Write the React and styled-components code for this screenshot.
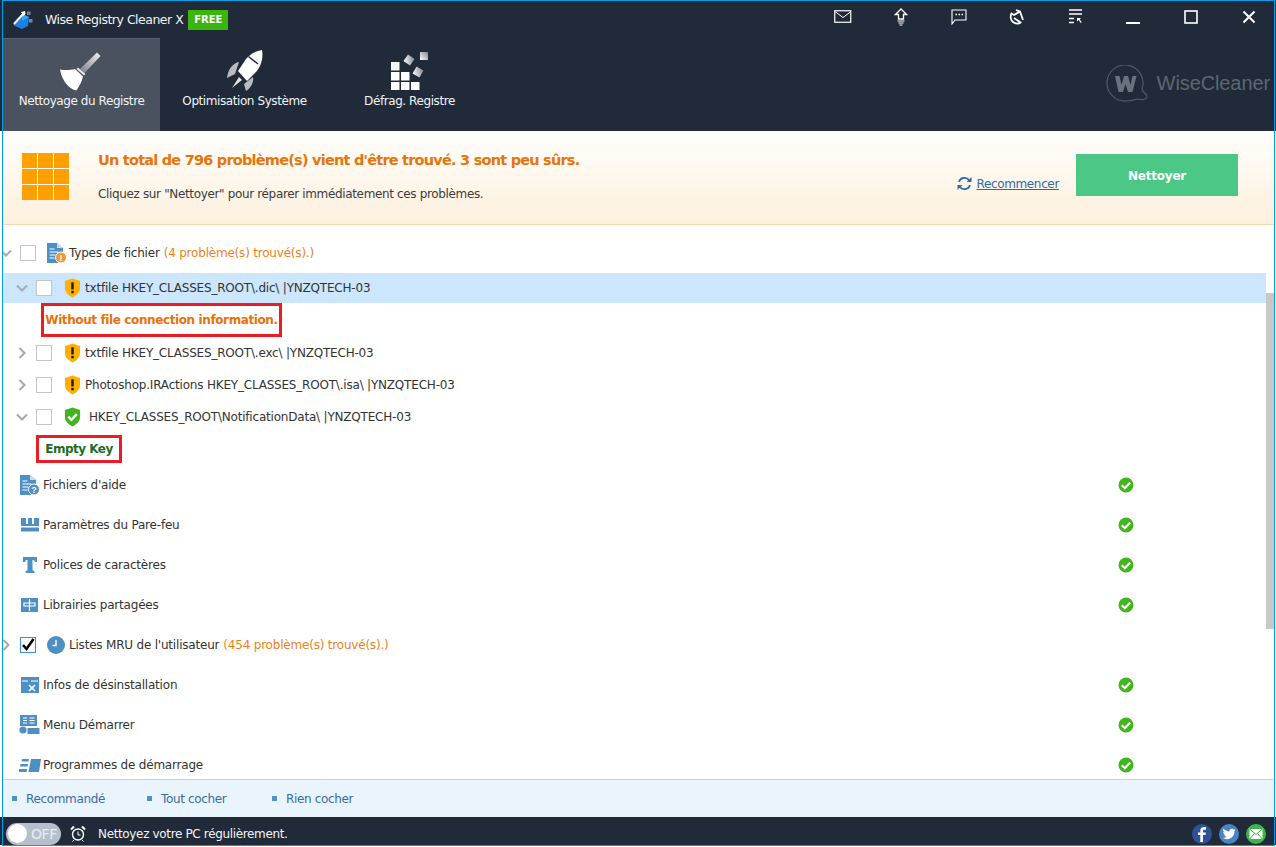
import React from "react";
import styled, { createGlobalStyle } from "styled-components";

const GlobalStyle = createGlobalStyle`
  html, body {
    margin: 0;
    padding: 0;
    height: 100%;
    overflow: hidden;
  }
  body {
    font-family: "DejaVu Sans", "Liberation Sans", sans-serif;
    background: linear-gradient(
      #202a39 131px,
      #fff 131px,
      #fff 817px,
      #202a39 817px,
      #202a39 845px,
      #fff 845px
    );
  }
`;

const Win = styled.div`
  box-sizing: border-box;
  width: 1273px;
  height: 846px;
  margin-left: 2px;
  border: 1px solid #00a0e9;
  background: #fff;
  display: flex;
  flex-direction: column;
  overflow: hidden;
  font-size: 12px;
  letter-spacing: -0.35px;
  color: #333;
`;

const Header = styled.header`
  height: 130px;
  flex: none;
  background: #202a39;
  display: flex;
  flex-direction: column;
  color: #fff;
`;

const TitleBar = styled.div`
  height: 37px;
  flex: none;
  display: flex;
  align-items: center;
  padding-left: 9px;
`;

const TitleText = styled.span`
  margin-left: 11px;
  font-size: 12.5px;
  letter-spacing: -0.5px;
  color: #f0f2f5;
`;

const FreeBadge = styled.span`
  margin-left: 5px;
  width: 40px;
  height: 20px;
  background: #38b60e;
  color: #fff;
  font-size: 10px;
  font-weight: bold;
  letter-spacing: 0;
  display: flex;
  align-items: center;
  justify-content: center;
`;

const TitleTools = styled.div`
  margin-left: auto;
  margin-right: -4px;
  display: flex;
  align-items: center;
`;

const ToolBtn = styled.span`
  width: 58px;
  height: 30px;
  display: flex;
  align-items: center;
  justify-content: center;
  margin-top: -6px;
`;

const TabRow = styled.div`
  flex: 1;
  display: flex;
  align-items: stretch;
`;

const Tab = styled.div`
  width: ${(p) => p.$w}px;
  flex: none;
  box-sizing: border-box;
  display: flex;
  flex-direction: column;
  align-items: center;
  background: ${(p) => (p.$active ? "#4a5260" : "transparent")};
  border-top: 1px solid ${(p) => (p.$active ? "#5a6270" : "transparent")};
  padding-top: 11px;
  font-size: 12px;
  letter-spacing: -0.42px;
`;

const TabIcon = styled.div`
  height: 42px;
  display: flex;
  align-items: center;
  justify-content: center;
`;

const TabLabel = styled.div`
  margin-top: 2px;
  white-space: nowrap;
  color: #f2f4f7;
`;

const Brand = styled.div`
  margin-left: auto;
  display: flex;
  align-items: center;
  padding-right: 4px;
  padding-bottom: 2px;
  font-family: "Liberation Sans", sans-serif;
  font-size: 20px;
  letter-spacing: -0.1px;
  color: #5e6671;
  gap: 6px;
`;

const Banner = styled.section`
  height: 94px;
  flex: none;
  box-sizing: border-box;
  background: linear-gradient(#fffefd, #fdf0dd);
  border-bottom: 1px solid #f5d8ad;
  display: flex;
  align-items: flex-start;
  padding: 22px 36px 0 19px;
`;

const WarnGrid = styled.div`
  width: 47px;
  height: 47px;
  flex: none;
  display: grid;
  grid-template-columns: repeat(3, 15px);
  grid-template-rows: repeat(3, 15px);
  gap: 1px;
  span {
    background: #ff9f00;
  }
`;

const BannerText = styled.div`
  margin-left: 29px;
  flex: 1;
`;

const BannerTitle = styled.div`
  margin-top: -2px;
  font-size: 14.5px;
  font-weight: bold;
  letter-spacing: -0.78px;
  line-height: 18px;
  color: #e8750a;
`;

const BannerSub = styled.div`
  margin-top: 17px;
  line-height: 16px;
  color: #3c3c3c;
`;

const RestartLink = styled.a`
  display: flex;
  align-items: center;
  gap: 4px;
  margin-top: 23px;
  margin-right: 17px;
  color: #2b6cab;
  span {
    text-decoration: underline;
  }
`;

const CleanBtn = styled.button`
  width: 162px;
  height: 42px;
  border: 0;
  padding: 2px 0 0;
  margin-top: 1px;
  background: #4bc885;
  color: #fff;
  font-family: inherit;
  font-size: 12px;
  font-weight: bold;
  letter-spacing: -0.2px;
`;

const Body = styled.div`
  flex: 1;
  min-height: 0;
  display: flex;
  overflow: hidden;
`;

const List = styled.div`
  flex: 1;
  min-width: 0;
  padding-top: 8px;
  letter-spacing: -0.2px;
`;

const Track = styled.div`
  width: 8px;
  flex: none;
  padding-top: 68px;
`;

const Thumb = styled.div`
  height: 336px;
  background: #c8c8c8;
`;

const Row = styled.div`
  height: ${(p) => p.$h}px;
  display: flex;
  align-items: center;
  background: ${(p) => (p.$selected ? "#cbe6fd" : "transparent")};
  padding-left: ${(p) => p.$indent || 0}px;
  white-space: nowrap;
`;

const Caret = styled.span`
  width: 17px;
  flex: none;
  margin-left: ${(p) => p.$ml || 0}px;
  display: flex;
  justify-content: ${(p) => (p.$group ? "flex-start" : "center")};
`;

const Check = styled.span`
  box-sizing: border-box;
  width: 16px;
  height: 16px;
  flex: none;
  margin-left: ${(p) => p.$ml}px;
  margin-right: ${(p) => p.$mr}px;
  background: #fff;
  border: 1px solid ${(p) => (p.$on ? "#3f8fe8" : "#c4c4c4")};
  display: flex;
  align-items: center;
  justify-content: center;
`;

const IconBox = styled.span`
  width: ${(p) => p.$w || 22}px;
  flex: none;
  display: flex;
  align-items: center;
  justify-content: ${(p) => p.$align || "flex-start"};
`;

const Found = styled.span`
  margin-left: 4px;
  color: #ee7f1c;
`;

const Label = styled.span`
  margin-left: ${(p) => p.$ml || 0}px;
`;

const Status = styled.span`
  margin-left: auto;
  margin-right: 132px;
  display: flex;
`;

const NoteBox = styled.div`
  box-sizing: border-box;
  height: ${(p) => p.$h}px;
  width: ${(p) => p.$w}px;
  border: 3px solid #ec1c24;
  display: flex;
  align-items: center;
  justify-content: center;
  font-weight: bold;
  letter-spacing: ${(p) => p.$ls}px;
  color: ${(p) => p.$color};
`;

const NoteRow = styled.div`
  height: ${(p) => p.$h}px;
  display: flex;
  align-items: center;
  padding-left: ${(p) => p.$indent}px;
`;

const ActionBar = styled.div`
  height: 38px;
  flex: none;
  box-sizing: border-box;
  background: #eaf4fd;
  border-top: 1px solid #cdd5dc;
  display: flex;
  align-items: center;
  padding-left: 9px;
  color: #3a6ba5;
`;

const Action = styled.span`
  width: ${(p) => p.$w}px;
  flex: none;
  display: flex;
  align-items: center;
  gap: 9px;
  &::before {
    content: "";
    width: 5px;
    height: 5px;
    background: #4e93c9;
  }
`;

const StatusBar = styled.footer`
  height: 28px;
  flex: none;
  box-sizing: border-box;
  background: #202a39;
  display: flex;
  align-items: center;
  padding: 5px 8px 0 3px;
  color: #f2f4f7;
`;

const Toggle = styled.div`
  box-sizing: border-box;
  width: 55px;
  height: 22px;
  border-radius: 11px;
  background: #b6c0cc;
  display: flex;
  align-items: center;
  padding-left: 2px;
  color: #e8edf2;
  font-size: 14px;
  letter-spacing: -0.4px;
`;

const Knob = styled.span`
  width: 19px;
  height: 19px;
  border-radius: 50%;
  background: #fff;
  margin-right: 4px;
`;

const Clock = styled.span`
  display: flex;
  margin-left: 9px;
  margin-right: 12px;
`;

const Socials = styled.div`
  margin-left: auto;
  display: flex;
  gap: 7px;
`;

const Chevron = ({ open }) => (
  <svg width="12" height="12" viewBox="0 0 12 12">
    <path
      d={open ? "M1 3.5l5 5 5-5" : "M3.5 1l5 5-5 5"}
      fill="none"
      stroke="#a8a8a8"
      strokeWidth="2"
    />
  </svg>
);

const Shield = ({ ok }) =>
  ok ? (
    <svg width="17" height="20" viewBox="0 0 18 20">
      <path d="M9 0l8 2.5v7.5c0 5-4 8-8 10-4-2-8-5-8-10V2.5z" fill="#3fb41e" />
      <path d="M4.5 9.5l3.3 3.4 5.8-6" fill="none" stroke="#fff" strokeWidth="2.6" />
    </svg>
  ) : (
    <svg width="17" height="20" viewBox="0 0 18 20">
      <path d="M9 0l8 2.5v7.5c0 5-4 8-8 10-4-2-8-5-8-10V2.5z" fill="#ffb000" />
      <rect x="7.7" y="4" width="2.6" height="7.5" fill="#20180a" />
      <rect x="7.7" y="13" width="2.6" height="2.6" fill="#20180a" />
    </svg>
  );

const OkMark = () => (
  <svg width="16" height="16" viewBox="0 0 16 16">
    <circle cx="8" cy="8" r="7.5" fill="#41b51f" />
    <path d="M3.8 8.2l3 3 5.4-5.6" fill="none" stroke="#fff" strokeWidth="2.2" />
  </svg>
);

const blue = "#4e8fc4";

const FileDocIcon = ({ badge, mark }) => (
  <svg width="20" height="20" viewBox="0 0 20 20">
    <path d="M0 0h10l6 5v15H0z" fill={blue} />
    <path d="M10 0l6 5h-6z" fill="#c7dcee" />
    <path d="M2.500 6h5M2.500 9h9M2.500 12h6M2.500 15h5" stroke="#fff" strokeWidth="1.200" />
    <circle cx="14" cy="14.500" r="5.500" fill={badge} stroke="#fff" />
    <text x="14" y="18" fontSize="9" fontWeight="bold" fill="#fff" textAnchor="middle" fontFamily="Liberation Sans">
      {mark}
    </text>
  </svg>
);

const FirewallIcon = () => (
  <svg width="18" height="14" viewBox="0 0 18 14">
    <path d="M0 0h5v6h2V0h4v6h2V0h5v8H0z" fill={blue} />
    <rect y="9.500" width="18" height="4" fill={blue} />
  </svg>
);

const FontIcon = () => (
  <svg width="16" height="16" viewBox="0 0 16 16">
    <path d="M1 0h14v5h-2l-1-2H10.500v10l2 1.500V16H3.500v-1.500l2-1.500V3H4L3 5H1z" fill={blue} />
  </svg>
);

const LibIcon = () => (
  <svg width="17" height="14" viewBox="0 0 17 14">
    <rect width="17" height="14" fill={blue} />
    <path d="M8.500 1v12M3 5h11v3H3z" fill="none" stroke="#fff" strokeWidth="1.200" />
  </svg>
);

const ClockIcon = () => (
  <svg width="18" height="18" viewBox="0 0 18 18">
    <circle cx="9" cy="9" r="9" fill={blue} />
    <path d="M9 4v5.500H5.500" fill="none" stroke="#fff" strokeWidth="1.400" />
  </svg>
);

const UninstallIcon = () => (
  <svg width="18" height="16" viewBox="0 0 18 16">
    <rect width="18" height="16" fill={blue} />
    <path d="M1 4h6M10 4h7" stroke="#fff" strokeWidth="1" />
    <path d="M8 8l6 6M14 8l-6 6" stroke="#fff" strokeWidth="1.600" />
  </svg>
);

const StartMenuIcon = () => (
  <svg width="21" height="20" viewBox="0 0 21 20">
    <rect x="1" y="0" width="17" height="11" fill={blue} />
    <path d="M4 3h4M4 5.500h4M4 8h4M10.500 3h5M10.500 5.500h5M10.500 8h5" stroke="#fff" strokeWidth="1" />
    <circle cx="4" cy="15" r="3.600" fill={blue} />
    <rect x="8.500" y="13" width="12" height="6" fill={blue} />
  </svg>
);

const StartupIcon = () => (
  <svg width="22" height="13" viewBox="0 0 22 13">
    <path d="M12 0h10l-2 13H9.500z" fill={blue} />
    <path d="M3 0h7l-.5 2.500H2.500zM1.500 5h7.500L8.500 7.500h-7.500zM0 10h8l-.4 3H0z" fill={blue} />
  </svg>
);

const ToolIcons = [
  <svg key="m" width="18" height="13" viewBox="0 0 18 13">
    <rect x=".75" y=".75" width="16" height="11.500" fill="none" stroke="#fff" strokeWidth="1.200" />
    <path d="M1 1.500l8 6 8-6" fill="none" stroke="#fff" />
  </svg>,
  <svg key="u" width="14" height="18" viewBox="0 0 14 18">
    <path d="M7 1L1.500 6.500H4.500V11h5V6.500h3z" fill="none" stroke="#fff" strokeWidth="1.300" />
    <path d="M3.500 13h7M4.500 15h5M5.500 17h3" stroke="#fff" strokeWidth="1" />
  </svg>,
  <svg key="c" width="16" height="16" viewBox="0 0 16 16">
    <path d="M1 1h14v10H4l-3 4z" fill="none" stroke="#fff" strokeWidth="1.100" />
    <path d="M4.500 5.500h1.500M7.500 5.500H9M10.500 5.500H12" stroke="#fff" strokeWidth="1.600" />
  </svg>,
  <svg key="s" width="16" height="16" viewBox="0 0 16 16">
    <path d="M7 1l4 1.500 3 8.500M11 2.500L5 6 2.500 4.500C1 7 1.500 11 4 13c2.500 2 6 2 7.500.5L5 9" fill="none" stroke="#fff" strokeWidth="1.800" />
  </svg>,
  <svg key="l" width="15" height="15" viewBox="0 0 15 15">
    <path d="M1 1h13M1 5h13M1 9.500h5M1 13.500h5" stroke="#fff" strokeWidth="1.300" />
    <path d="M9 9h4l-1.300 1.300 2 3-1 .7-2-3L9 12.500z" fill="#fff" />
  </svg>,
  <svg key="min" width="14" height="14" viewBox="0 0 14 14">
    <rect y="12" width="14" height="2" fill="#fff" />
  </svg>,
  <svg key="max" width="14" height="14" viewBox="0 0 14 14">
    <rect x="1" y="1" width="12" height="12" fill="none" stroke="#fff" strokeWidth="1.600" />
  </svg>,
  <svg key="x" width="14" height="14" viewBox="0 0 14 14">
    <path d="M1.500 1.500l11 11M12.500 1.500l-11 11" stroke="#fff" strokeWidth="2" />
  </svg>,
];

const AppLogo = () => (
  <svg width="22" height="20" viewBox="0 0 22 20">
    <path d="M10 4l7 3-1 9-6 3-7-3-2-2z" fill="#1f7fe0" />
    <path d="M10 4l7 3-7 4z" fill="#34a6f0" />
    <path d="M2 14L12 3" stroke="#fff" strokeWidth="2" />
    <path d="M9 2l4-1 .5 3-2 2z" fill="#fff" />
    <rect x="15" y="1.500" width="3.500" height="3.500" fill="#7b8496" />
    <rect x="17" y="9" width="3.500" height="3.500" fill="#7b8496" />
  </svg>
);

const BroomIcon = () => (
  <svg width="44" height="40" viewBox="0 0 44 40">
    <defs>
      <linearGradient id="handle" x1="0" y1="1" x2="1" y2="0">
        <stop offset="0" stopColor="#777d88" />
        <stop offset="1" stopColor="#f2f2f2" />
      </linearGradient>
    </defs>
    <path d="M20 18L37 1.500l3.500 3.500L24.500 22z" fill="url(#handle)" />
    <path d="M18 16.500l7.500 6.500-1.500 1.500-7.500-6.500z" fill="#e8e8e8" />
    <path d="M0 18.500c5 1 11 .5 15-.5l8 7.500c-1 5-4 10-6.500 14C9 38 2 30 0 18.500z" fill="#fff" />
  </svg>
);

const RocketIcon = () => (
  <svg width="36" height="42" viewBox="0 0 36 42">
    <path d="M35 0c1.500 8-1 16-6 22l-9 9-9-10 8-12C23 4 29 1 35 0z" fill="#fff" />
    <path d="M21.500 6.500L31 14" stroke="#202a39" strokeWidth="1.500" />
    <path d="M12 12C6 13 1 19 0 28l8-4z" fill="#b8bcc2" />
    <path d="M26 27c1 5-2 11-7 14l-2-7z" fill="#b8bcc2" />
    <path d="M12 27l-7 11 10-8z" fill="#e2e2e2" />
  </svg>
);

const DefragIcon = () => (
  <svg width="38" height="38" viewBox="0 0 38 38">
    <defs>
      <linearGradient id="blk" x1="0" y1="1" x2="1" y2="0">
        <stop offset="0" stopColor="#fff" />
        <stop offset="1" stopColor="#808690" />
      </linearGradient>
    </defs>
    <rect x="0" y="10" width="8.500" height="8.500" fill="#f4f4f4" />
    <rect x="0" y="20" width="8.500" height="8.500" fill="#fff" />
    <rect x="10" y="20" width="8.500" height="8.500" fill="#fff" />
    <rect x="0" y="30" width="8.500" height="8.500" fill="#fff" />
    <rect x="10" y="30" width="8.500" height="8.500" fill="#fff" />
    <rect x="20" y="30" width="8.500" height="8.500" fill="#fff" />
    <rect x="14" y="4" width="8" height="8" fill="url(#blk)" transform="rotate(35 18 8)" />
    <rect x="29" y="0" width="8" height="8" fill="url(#blk)" />
    <rect x="23" y="16" width="8" height="8" fill="url(#blk)" transform="rotate(30 27 20)" />
  </svg>
);

const BrandMark = () => (
  <svg width="45" height="38" viewBox="0 0 45 38" fill="none">
    <path
      d="M36 24A18 18 0 1 0 20 36c5 0 8-1 12-2 3 1 8 1 9-2 1-2-4-4-5-8z"
      stroke="#515a66"
      strokeWidth="1.200"
    />
    <path d="M9 11h4.500l2 9 2.500-9h4l2.500 9 2-9H30.500l-4 16h-4.500l-2.500-8-2.500 8h-4.500z" fill="#6a727d" />
  </svg>
);

const RefreshIcon = () => (
  <svg width="15" height="15" viewBox="0 0 15 15">
    <path d="M2 6a5.700 5.700 0 0 1 10-2" fill="none" stroke="#2b6cab" strokeWidth="1.700" />
    <path d="M13 9a5.700 5.700 0 0 1-10 2" fill="none" stroke="#2b6cab" strokeWidth="1.700" />
    <path d="M14.500 1v5h-5zM.5 14V9h5z" fill="#2b6cab" />
  </svg>
);

const AlarmIcon = () => (
  <svg width="16" height="17" viewBox="0 0 16 17" fill="none" stroke="#fff">
    <circle cx="8" cy="9.500" r="5.500" strokeWidth="1.400" />
    <path d="M8 6.500v3.500h2.500" />
    <path d="M1 4.500L4 1.500M15 4.500l-3-3" strokeWidth="2" />
    <path d="M4 15l-1.500 1.500M12 15l1.500 1.500" />
  </svg>
);

const Social = ({ bg, children }) => (
  <svg width="20" height="20" viewBox="0 0 20 20">
    <circle cx="10" cy="10" r="10" fill={bg} />
    {children}
  </svg>
);

const Sel = ({ open, ok, selected, text, ml }) => (
  <Row $h={selected ? 30 : 32} $selected={selected} $indent={10}>
    <Caret>
      <Chevron open={open} />
    </Caret>
    <Check $ml={6} $mr={12} />
    <IconBox $w={21}>
      <Shield ok={ok} />
    </IconBox>
    <Label $ml={ml}>{text}</Label>
  </Row>
);

const Category = ({ icon, text }) => (
  <Row $h={40} $indent={15}>
    <IconBox $w={23} $align="center">
      {icon}
    </IconBox>
    <Label $ml={2}>{text}</Label>
    <Status>
      <OkMark />
    </Status>
  </Row>
);

const Group = ({ checked, icon, text, found }) => (
  <Row $h={40}>
    <Caret $group $ml={-3}>
      <Chevron open={!checked} />
    </Caret>
    <Check $ml={3} $mr={11} $on={checked}>
      {checked && (
        <svg width="14" height="14" viewBox="0 0 14 14">
          <path d="M2 7l3.500 4L12.500 1" fill="none" stroke="#000" strokeWidth="2.600" />
        </svg>
      )}
    </Check>
    <IconBox>{icon}</IconBox>
    <span>{text}</span>
    <Found>{found}</Found>
  </Row>
);

export default function App() {
  const tabs = [
    { w: 157, label: "Nettoyage du Registre", icon: <BroomIcon />, active: true },
    { w: 169, label: "Optimisation Système", icon: <RocketIcon /> },
    { w: 161, label: "Défrag. Registre", icon: <DefragIcon /> },
  ];

  return (
    <Win>
      <GlobalStyle />
      <Header>
        <TitleBar>
          <AppLogo />
          <TitleText>Wise Registry Cleaner X</TitleText>
          <FreeBadge>FREE</FreeBadge>
          <TitleTools>
            {ToolIcons.map((icon) => (
              <ToolBtn key={icon.key}>{icon}</ToolBtn>
            ))}
          </TitleTools>
        </TitleBar>
        <TabRow>
          {tabs.map((t) => (
            <Tab key={t.label} $w={t.w} $active={t.active}>
              <TabIcon>{t.icon}</TabIcon>
              <TabLabel>{t.label}</TabLabel>
            </Tab>
          ))}
          <Brand>
            <BrandMark />
            WiseCleaner
          </Brand>
        </TabRow>
      </Header>

      <Banner>
        <WarnGrid>
          {Array.from({ length: 9 }, (_, i) => (
            <span key={i} />
          ))}
        </WarnGrid>
        <BannerText>
          <BannerTitle>Un total de 796 problème(s) vient d'être trouvé. 3 sont peu sûrs.</BannerTitle>
          <BannerSub>Cliquez sur "Nettoyer" pour réparer immédiatement ces problèmes.</BannerSub>
        </BannerText>
        <RestartLink>
          <RefreshIcon />
          <span>Recommencer</span>
        </RestartLink>
        <CleanBtn>Nettoyer</CleanBtn>
      </Banner>

      <Body>
        <List>
          <Group
            icon={<FileDocIcon badge="#f39a2e" mark="!" />}
            text="Types de fichier"
            found="(4 problème(s) trouvé(s).)"
          />
          <Sel open selected text="txtfile HKEY_CLASSES_ROOT\.dic\ |YNZQTECH-03" />
          <NoteRow $h={34} $indent={38}>
            <NoteBox $h={34} $w={241} $ls={-0.39} $color="#ea7108">
              Without file connection information.
            </NoteBox>
          </NoteRow>
          <Sel text="txtfile HKEY_CLASSES_ROOT\.exc\ |YNZQTECH-03" />
          <Sel text="Photoshop.IRActions HKEY_CLASSES_ROOT\.isa\ |YNZQTECH-03" />
          <Sel open ok ml={4} text="HKEY_CLASSES_ROOT\NotificationData\ |YNZQTECH-03" />
          <NoteRow $h={32} $indent={33}>
            <NoteBox $h={28} $w={86} $ls={-0.5} $color="#1f6b1c">
              Empty Key
            </NoteBox>
          </NoteRow>
          <Category icon={<FileDocIcon badge={blue} mark="?" />} text="Fichiers d'aide" />
          <Category icon={<FirewallIcon />} text="Paramètres du Pare-feu" />
          <Category icon={<FontIcon />} text="Polices de caractères" />
          <Category icon={<LibIcon />} text="Librairies partagées" />
          <Group
            checked
            icon={<ClockIcon />}
            text="Listes MRU de l'utilisateur"
            found="(454 problème(s) trouvé(s).)"
          />
          <Category icon={<UninstallIcon />} text="Infos de désinstallation" />
          <Category icon={<StartMenuIcon />} text="Menu Démarrer" />
          <Category icon={<StartupIcon />} text="Programmes de démarrage" />
        </List>
        <Track>
          <Thumb />
        </Track>
      </Body>

      <ActionBar>
        <Action $w={135}>Recommandé</Action>
        <Action $w={125}>Tout cocher</Action>
        <Action $w={120}>Rien cocher</Action>
      </ActionBar>

      <StatusBar>
        <Toggle>
          <Knob />
          OFF
        </Toggle>
        <Clock>
          <AlarmIcon />
        </Clock>
        <span>Nettoyez votre PC régulièrement.</span>
        <Socials>
          <Social bg="#2f5296">
            <path d="M11 18v-7h2.500l.4-2.600H11V7c0-.8.3-1.300 1.400-1.300H14V3.300C13.600 3.200 12.800 3.100 12 3.100c-2.200 0-3.700 1.300-3.700 3.700v1.600H6V11h2.300v7z" fill="#fff" />
          </Social>
          <Social bg="#4a83c4">
            <path d="M16.500 5.800c-.5.200-1 .4-1.500.4.500-.3 1-.8 1.200-1.400-.5.300-1.100.5-1.700.7-1.500-1.700-4.500-.4-4 2C8 7.400 5.900 6.300 4.500 4.600c-.7 1.300-.3 2.900.9 3.700-.4 0-.9-.1-1.200-.3 0 1.400.9 2.500 2.200 2.800-.4.100-.8.100-1.200 0 .4 1.100 1.400 1.900 2.600 2-1.100.9-2.500 1.300-3.900 1.100 5.500 3.300 12-.3 11.500-6.800.5-.3 1-.8 1.100-1.300z" fill="#fff" />
          </Social>
          <Social bg="#3cb54a">
            <rect x="3.500" y="5" width="13" height="10" fill="#fff" />
            <path d="M3.500 5l6.500 5.500L16.500 5M3.500 15l4.500-5M16.500 15L12 10" fill="none" stroke="#3cb54a" />
          </Social>
        </Socials>
      </StatusBar>
    </Win>
  );
}
